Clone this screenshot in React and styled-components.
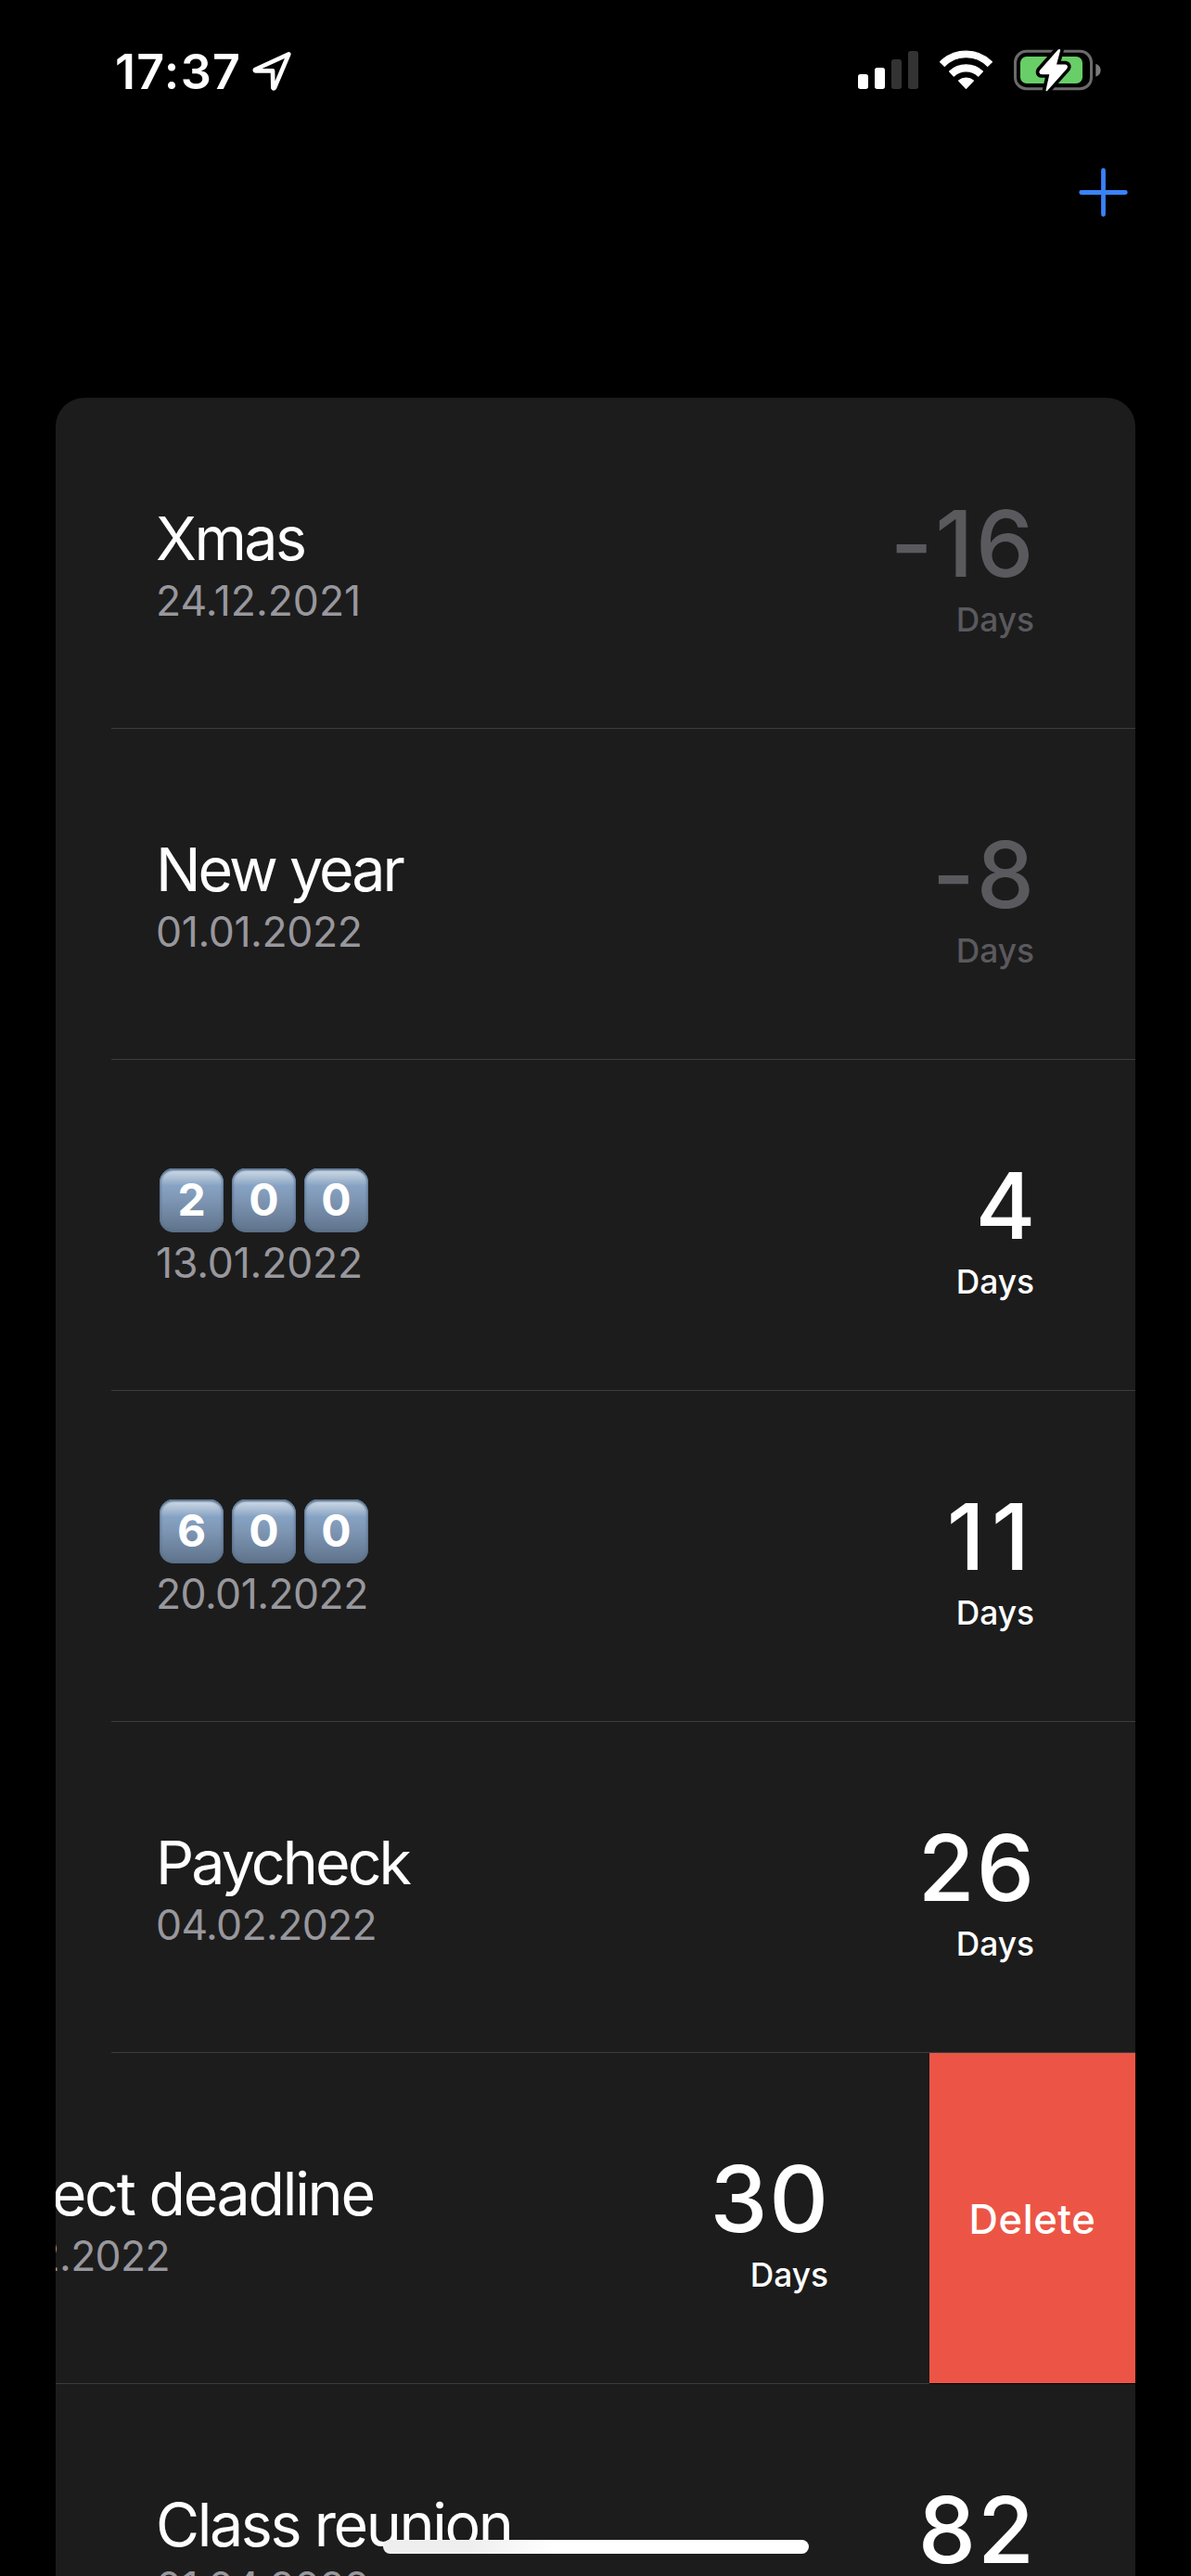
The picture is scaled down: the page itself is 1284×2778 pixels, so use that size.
import React from 'react';
import styled, { createGlobalStyle } from 'styled-components';

const GlobalStyle = createGlobalStyle`
  * { box-sizing: border-box; }
  body { margin: 0; background: #000; color: #fff; font-family: Inter, "Liberation Sans", sans-serif; }
`;

const Screen = styled.main`
  display: flex;
  flex-direction: column;
  width: 1284px;
  height: 2778px;
  overflow: hidden;
  background: #000;
`;

const StatusBar = styled.header`
  flex: none;
  display: flex;
  align-items: center;
  height: 154px;
  padding: 0 95px 0 124px;
`;

const Clock = styled.span`
  padding-top: 2px;
  font-size: 52px;
  line-height: 52px;
  font-weight: 600;
  letter-spacing: 1.3px;
  margin-right: 10px;
`;

const StatusIcons = styled.div`
  display: flex;
  align-items: center;
  gap: 21.5px;
  margin-left: auto;
`;

const Glyph = styled.svg`
  display: block;
  flex: none;
  width: ${(p) => p.$w}px;
  height: ${(p) => p.$h}px;
`;

const NavBar = styled.nav`
  flex: none;
  display: flex;
  justify-content: flex-end;
  align-items: flex-start;
  height: 275px;
  padding: 27px 68px 0 0;
`;

const AddButton = styled.button`
  display: flex;
  padding: 0;
  border: 0;
  background: none;
  color: #3a82f7;
`;

const Card = styled.ul`
  flex: none;
  list-style: none;
  margin: 0 60px;
  padding: 0;
  border-radius: 31px 31px 0 0;
  overflow: hidden;
  background: #1c1c1c;
`;

const Item = styled.li`
  display: flex;
  height: 357px;
`;

const Content = styled.div`
  flex: none;
  display: flex;
  flex-direction: column;
  width: 1164px;
  margin-left: ${(p) => (p.$swiped ? -222 : 0)}px;
`;

const Body = styled.div`
  flex: 1;
  display: flex;
  align-items: center;
  justify-content: space-between;
  padding: 5px 109px 0 108px;
`;

const Divider = styled.div`
  height: 1px;
  margin-left: ${(p) => (p.$full ? 0 : 60)}px;
  background: #3c3c3d;
`;

const Info = styled.div`
  display: flex;
  flex-direction: column;
`;

const Title = styled.div`
  height: 76px;
  font-size: 64.5px;
  line-height: 76px;
  letter-spacing: ${(p) => p.$tracking}px;
  white-space: nowrap;
`;

const DateText = styled.div`
  font-size: 44.5px;
  line-height: 58px;
  letter-spacing: ${(p) => p.$tracking}px;
  color: #98979d;
  white-space: nowrap;
`;

const Counter = styled.div`
  display: flex;
  flex-direction: column;
  align-items: flex-end;
  color: ${(p) => (p.$past ? '#5a595e' : '#fff')};
  font-weight: 500;
`;

const Count = styled.div`
  margin-right: -2px;
  font-size: 99px;
  line-height: 116px;
  letter-spacing: ${(p) => p.$tracking}px;
  white-space: nowrap;
`;

const Unit = styled.div`
  margin-top: 2px;
  font-size: 35.3px;
  line-height: 46px;
`;

const Keycaps = styled.div`
  display: flex;
  align-items: center;
  gap: 9px;
  height: 76px;
  padding-left: 4px;
`;

const Keycap = styled.span`
  display: flex;
  justify-content: center;
  width: 69px;
  height: 69px;
  border-radius: 15px;
  background: linear-gradient(#c9d6e4 3px, #a9bdd3 11px, #86a2c3 19px, #7d95b2 35px, #61758e 66px);
  box-shadow: inset 0 3px 2px -1px #5a7593, inset 0 0 3px 1px #566c87;
  font-size: 48px;
  line-height: 67px;
  font-weight: 650;
`;

const DeleteButton = styled.button`
  flex: none;
  width: 222px;
  height: 356px;
  padding: 2px 0 0;
  border: 0;
  box-shadow: 0 1px 0 #000;
  background: #ec5545;
  color: #fff;
  font: 500 43.5px/58px Inter, "Liberation Sans", sans-serif;
  letter-spacing: 0.6px;
`;

const HomeIndicator = styled.div`
  position: absolute;
  left: 413px;
  top: 2739px;
  width: 459px;
  height: 15px;
  border-radius: 8px;
  background: linear-gradient(90deg, #eee 20%, #fff 40%);
`;

const events = [
  { title: 'Xmas', tt: -2.6, date: '24.12.2021', dt: 0, days: '-16', nt: 2.7, past: true },
  { title: 'New year', tt: -3, date: '01.01.2022', dt: -0.39, days: '-8', nt: 2, past: true },
  { keycaps: '200', date: '13.01.2022', dt: -0.18, days: '4', nt: 0.5 },
  { keycaps: '600', date: '20.01.2022', dt: -0.55, days: '11', nt: 7 },
  { title: 'Paycheck', tt: -2.9, date: '04.02.2022', dt: -0.65, days: '26', nt: 2 },
  { title: 'Project deadline', tt: -2.25, date: '08.02.2022', dt: -0.7, days: '30', nt: 1.8, swiped: true },
  { title: 'Class reunion', tt: -2.4, date: '01.04.2022', dt: -0.6, days: '82', nt: 2 },
];

const BOLT = 'M724 72 L665 139 Q661 147 669 148 L697 148 L685 202 L749 130 Q753 122 745 121 L714 121 L727 72 Z';

function EventRow({ event }) {
  return (
    <Item>
      <Content $swiped={event.swiped}>
        <Body>
          <Info>
            {event.keycaps ? (
              <Keycaps>{[...event.keycaps].map((d, i) => <Keycap key={i}>{d}</Keycap>)}</Keycaps>
            ) : (
              <Title $tracking={event.tt}>{event.title}</Title>
            )}
            <DateText $tracking={event.dt}>{event.date}</DateText>
          </Info>
          <Counter $past={event.past}>
            <Count $tracking={event.nt}>{event.days}</Count>
            <Unit>Days</Unit>
          </Counter>
        </Body>
        <Divider $full={event.swiped} />
      </Content>
      {event.swiped && <DeleteButton>Delete</DeleteButton>}
    </Item>
  );
}

export default function App() {
  return (
    <Screen>
      <GlobalStyle />
      <StatusBar>
        <Clock>17:37</Clock>
        <Glyph $w={46} $h={46} viewBox="510 72 138 138">
          <path d="M634 85 L525 135 Q523 139 527 139 L582 139 L583 194 Q585 198 588 194 Z" fill="none" stroke="#fff" strokeWidth="14" strokeLinejoin="round" />
        </Glyph>
        <StatusIcons>
          <Glyph $w={65} $h={54} viewBox="75 60 195 162">
            <rect x="75" y="150" width="33" height="48" rx="8" fill="#fff" />
            <rect x="129" y="129" width="33" height="69" rx="8" fill="#fff" />
            <rect x="183" y="102" width="33" height="96" rx="8" fill="#333" />
            <rect x="237" y="75" width="33" height="123" rx="8" fill="#333" />
          </Glyph>
          <Glyph $w={59} $h={54} viewBox="336 60 177 162">
            <g fill="#fff" stroke="#fff" strokeWidth="4" strokeLinejoin="round">
              <path d="M341 110 A118 118 0 0 1 508 110 L494 124 A98 98 0 0 0 355 124 Z" />
              <path d="M371 141 A78 78 0 0 1 478 141 L464 156 A58 58 0 0 0 385 156 Z" />
              <path d="M401 171 A36 36 0 0 1 448 171 L424.5 196 Z" />
            </g>
          </Glyph>
          <Glyph $w={97} $h={54} viewBox="576 60 291 162">
            <rect x="583.5" y="76" width="246" height="121" rx="36" fill="none" stroke="#6b6b6b" strokeWidth="9" />
            <rect x="600" y="93" width="201" height="87" rx="20" fill="#68ce67" />
            <path d="M844 116 Q860 122 860 137 Q860 152 844 158 Z" fill="#7b7b7b" />
            <path d={BOLT} fill="#000" stroke="#000" strokeWidth="27" strokeLinejoin="round" />
            <path d={BOLT} fill="#fff" stroke="#fff" strokeWidth="5" strokeLinejoin="round" />
          </Glyph>
        </StatusIcons>
      </StatusBar>
      <NavBar>
        <AddButton aria-label="Add">
          <Glyph $w={53} $h={53} viewBox="0 0 53 53">
            <path d="M26.5 2.7V50.3M2.7 26.5H50.3" stroke="currentColor" strokeWidth="4.8" strokeLinecap="round" />
          </Glyph>
        </AddButton>
      </NavBar>
      <Card>
        {events.map((event) => <EventRow key={event.date} event={event} />)}
      </Card>
      <HomeIndicator />
    </Screen>
  );
}
